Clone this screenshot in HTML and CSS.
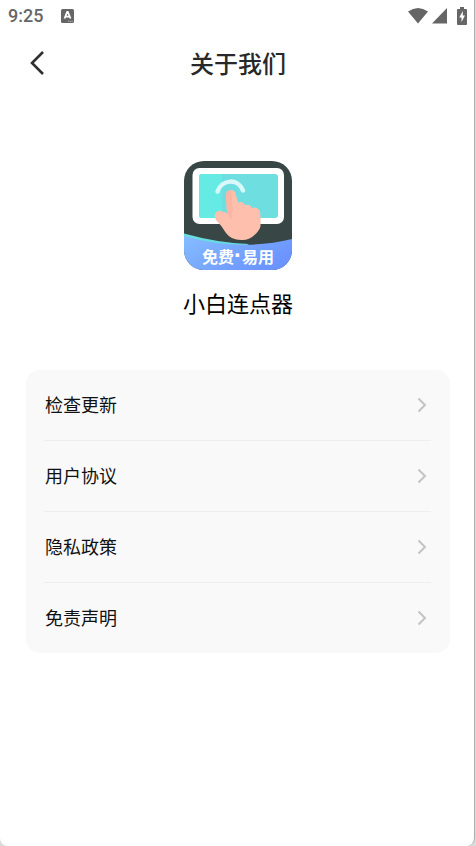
FILE: index.html
```
<!DOCTYPE html>
<html lang="zh-CN">
<head>
<meta charset="utf-8">
<meta name="viewport" content="width=device-width, initial-scale=1">
<title>关于我们</title>
<link rel="stylesheet" href="styles.css">
</head>
<body>
<div class="screen">
  <div class="status">
    <span class="time">9:25</span>
    <svg class="notice" width="13" height="14" viewBox="0 0 13 14" aria-hidden="true"><rect width="13" height="14" rx="1.5" fill="#666"/><path d="M3.500 9.500 6.200 3h.6l2.700 6.500M4.700 7.600h3.600" fill="none" stroke="#fff" stroke-width="1.800"/><path d="M7 12.300h5" stroke="#bbb" stroke-dasharray="1.200 .6"/></svg>
    <div class="indicators">
      <svg width="20" height="16" viewBox="0 0 20 16" aria-hidden="true"><path d="M0 3.500Q10-3.500 20 3.500L10 15.500z" fill="#666"/></svg>
      <svg width="15" height="16" viewBox="0 0 15 16" aria-hidden="true"><path d="M15 0v15.500H0z" fill="#666"/></svg>
      <svg class="battery" width="10" height="18" viewBox="0 0 10 18" aria-hidden="true"><path d="M3 0h4v2h2q1 0 1 1v14q0 1-1 1H1q-1 0-1-1V3q0-1 1-1h2z" fill="#666"/><path d="M5.800 4 2.200 10.500h2.300V15L8 8.500H5.800z" fill="#fff"/></svg>
    </div>
  </div>
  <header class="bar">
    <button class="back" type="button" aria-label="返回"><svg width="16" height="26" viewBox="0 0 16 26" aria-hidden="true"><path d="M14 2 3 13l11 11" fill="none" stroke="#303030" stroke-width="2.600"/></svg></button>
    <h1>关于我们</h1>
  </header>
  <main>
    <section class="brand">
      <svg class="logo" width="108" height="109" viewBox="0 0 108 109" role="img" aria-label="免费·易用">
        <defs>
          <clipPath id="tile"><rect width="108" height="109" rx="20"/></clipPath>
          <linearGradient id="blue" x2="1" y2=".5"><stop stop-color="#86bdff"/><stop offset="1" stop-color="#6b94ff"/></linearGradient>
          <linearGradient id="edge"><stop stop-color="#69e0df"/><stop offset="1" stop-color="#64d5e1"/></linearGradient>
        </defs>
        <g clip-path="url(#tile)">
          <rect width="108" height="109" fill="#384746"/>
          <rect x="8.500" y="7" width="91.500" height="56" rx="7" fill="#fff"/>
          <rect x="15" y="13" width="79" height="44" rx="3" fill="#6edee1"/>
          <path d="M18 13h20v44H18q-3 0-3-3V16q0-3 3-3z" fill="#65ebe4"/>
          <path d="M0 72.500Q34 82 65 83L48 92 0 78z" fill="url(#edge)"/>
          <path d="M0 75Q55 91 108 78v31H0z" fill="url(#blue)"/>
          <path d="M33.500 30.500C38 18 54 17 59 29.500" fill="none" stroke="#d9f8fa" stroke-width="4.500" stroke-linecap="round"/>
          <path d="M42 34a5 5 0 0 1 10 0l2 7.500q5-2 7 2.500 5-1.500 7 3 5-2 8 3 .8 8 .5 15-.5 4-6 9Q65 79.500 57 79 47 79 42 72q-4-7-10-13-2-4-1-6 2-4 6-3 3 1 6 2z" fill="#ffbfad"/>
          <path d="M42 34a5 5 0 0 1 5-5l2 20-2 10-4-7z" fill="#ffb5a3"/>
          <text class="logo-text" x="54" y="102" text-anchor="middle">免费<tspan class="logo-dot">·</tspan>易用</text>
        </g>
      </svg>
      <p class="name">小白连点器</p>
    </section>
    <nav class="menu">
      <a href="#update"><span>检查更新</span><svg width="10" height="16" viewBox="0 0 10 16" aria-hidden="true"><path d="m1.500 1.500 6.500 6.500-6.500 6.500"/></svg></a>
      <a href="#terms"><span>用户协议</span><svg width="10" height="16" viewBox="0 0 10 16" aria-hidden="true"><path d="m1.500 1.500 6.500 6.500-6.500 6.500"/></svg></a>
      <a href="#privacy"><span>隐私政策</span><svg width="10" height="16" viewBox="0 0 10 16" aria-hidden="true"><path d="m1.500 1.500 6.500 6.500-6.500 6.500"/></svg></a>
      <a href="#disclaimer"><span>免责声明</span><svg width="10" height="16" viewBox="0 0 10 16" aria-hidden="true"><path d="m1.500 1.500 6.500 6.500-6.500 6.500"/></svg></a>
    </nav>
  </main>
</div>
</body>
</html>
```
FILE: styles.css
```
* { box-sizing: border-box; }
body {
  margin: 0;
  padding-right: 1px;
  background: #dcdcdc;
  color: #111;
  font-family: "Noto Sans CJK SC", sans-serif;
}
.screen {
  min-height: 100vh;
  background: #fff;
  border-right: 1px solid #adadad;
  border-radius: 0 0 8px 8px;
}
.status {
  display: flex;
  align-items: center;
  height: 32px;
  padding: 0 7px 0 8px;
}
.time {
  color: #666;
  font: 500 18px/32px Roboto, sans-serif;
}
.notice { margin-left: 18px; }
.indicators {
  display: flex;
  align-items: center;
  gap: 4px;
  margin-left: auto;
}
.battery { margin-left: 6px; }
.bar {
  display: grid;
  grid-template-columns: 48px 1fr 46px;
  align-items: center;
  height: 62px;
}
.back {
  display: flex;
  justify-content: flex-end;
  padding: 0 3px 0 0;
  border: 0;
  background: none;
}
h1 {
  margin: 0;
  color: #282828;
  font-size: 24px;
  font-weight: 500;
  line-height: 32px;
  text-align: center;
}
.brand {
  display: flex;
  flex-direction: column;
  align-items: center;
  padding: 67px 0 0 2px;
}
.logo-text {
  fill: #fff;
  font-size: 16px;
  font-weight: 700;
}
.logo-dot { font-family: "Liberation Sans", sans-serif; font-size: 24px; }
.name {
  margin: 14px 0 0;
  color: #000;
  font-size: 22px;
  line-height: 36px;
}
.menu {
  margin: 50px 24px 0 26px;
  padding: 0 19px 0 18px;
  border-radius: 14px;
  background: #f9f9f9;
}
.menu a {
  display: flex;
  align-items: center;
  justify-content: space-between;
  box-sizing: content-box;
  height: 70px;
  padding: 0 4px 0 1px;
  color: #111;
  font-size: 18px;
  line-height: 28px;
  text-decoration: none;
}
.menu span { padding-bottom: 2px; }
.menu a + a { border-top: 1px solid #eee; }
.menu path {
  fill: none;
  stroke: #c4c4c4;
  stroke-width: 2;
}
```
